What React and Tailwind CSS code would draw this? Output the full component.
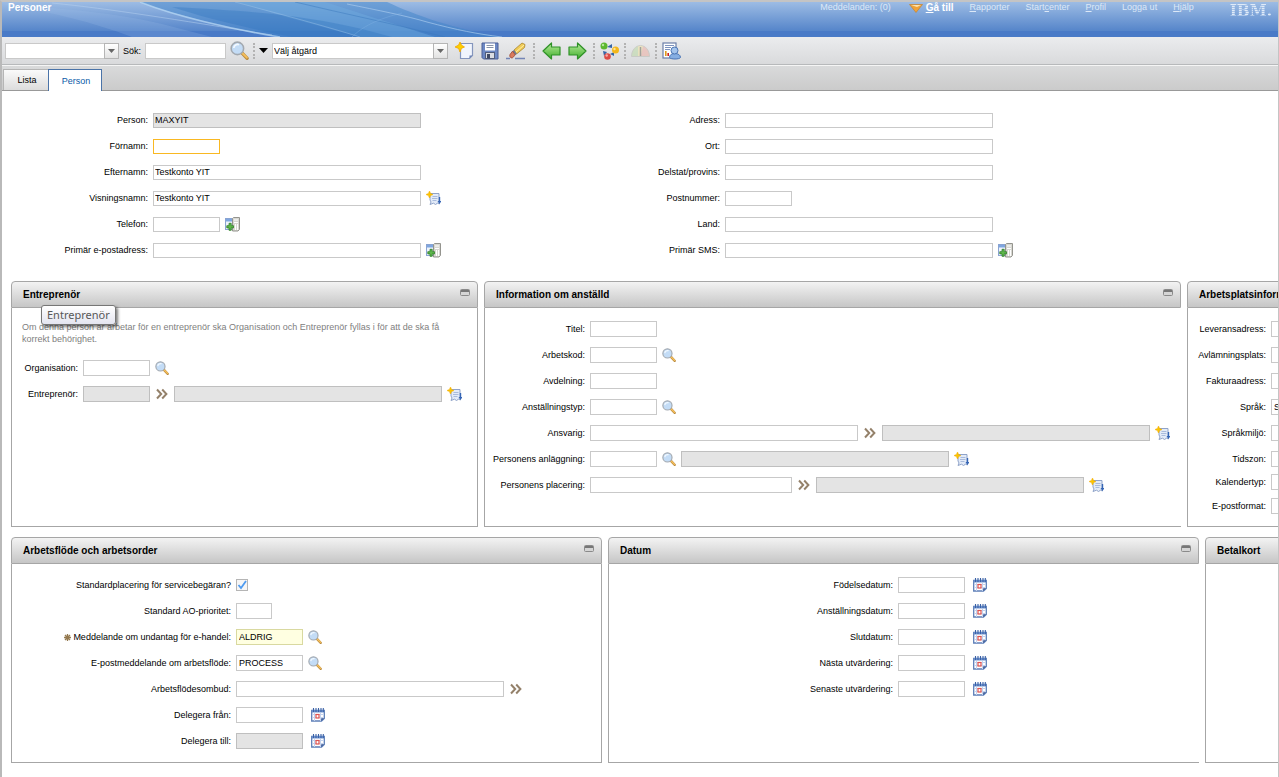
import React, { useId } from 'react';
import clsx from 'clsx';

function SearchIcon({ size = 14 }) {
  return (
    <svg width={size} height={size} viewBox="0 0 18 18">
      <path d="M11.500 11.500l4.700 4.900" stroke="#b98a3e" strokeWidth="3.200" strokeLinecap="round" />
      <path d="M11.800 11.600l4.200 4.200" stroke="#f5bf5c" strokeWidth="1.800" strokeLinecap="round" />
      <circle cx="7" cy="7" r="5.900" fill="#c3dcf6" stroke="#a3a9b0" strokeWidth="1.500" />
      <path d="M3.600 6.600a3.600 3.600 0 0 1 5-3" stroke="#f3f9ff" strokeWidth="1.600" fill="none" />
    </svg>
  );
}

function ChevronsIcon() {
  return (
    <svg width="12" height="12" viewBox="0 0 12 12" fill="none" stroke="#94816a" strokeWidth="2">
      <path d="M1 1.500L5.200 6 1 10.500M6.200 1.500L10.400 6l-4.200 4.500" />
    </svg>
  );
}

function DetailMenuIcon() {
  return (
    <svg width="15" height="15" viewBox="0 0 15 15">
      <path d="M4 2.500h9v8l.5 2.500-2-.8-2 1.300-2-1.300-3.500 1.300L5 11l-1-2z" fill="#e3ebf8" stroke="#8fa3c9" />
      <path d="M6.500 5.500h5M6 7.500h5.500M6.500 9.500h4" stroke="#a9bbdc" />
      <path d="M13.500 6v5" stroke="#3565b5" strokeWidth="1.400" />
      <path d="M11.500 10h4l-2 3z" fill="#3565b5" />
      <path d="M3.500 0l1.100 2.400L7 3.500 4.600 4.600 3.500 7 2.400 4.600 0 3.500l2.400-1.100z" fill="#fbc400" stroke="#f0a800" strokeWidth=".5" />
    </svg>
  );
}

function AddRowIcon() {
  return (
    <svg width="15" height="15" viewBox="0 0 15 15">
      <rect x=".5" y="1.500" width="8" height="11" fill="#eef3fb" stroke="#8aa4d2" />
      <path d="M1 2h7v2.500H1z" fill="#7fa6e0" />
      <path d="M7.500 1.500l1-1h6v12l-1.500 1.500H7.500z" fill="#d8d8d2" stroke="#94948e" />
      <path d="M9 3h4M9 5.500h4M10.500 7v6M12.500 7v6" stroke="#fff" />
      <path d="M4 6.300h2.200v2.400h2.300v2.200H6.200v2.400H4v-2.400H1.800V8.700H4z" fill="#5fb84b" stroke="#2f7d28" strokeWidth=".8" />
    </svg>
  );
}

function CalendarIcon() {
  return (
    <svg width="14" height="14" viewBox="0 0 14 14">
      <path d="M.7 2.500h12.600v8L10.500 13H.7z" fill="#fff" stroke="#5d7fb8" strokeWidth="1.300" />
      <path d="M1 2h12v2.500H1z" fill="#6f93cf" />
      <path d="M2.500 0v4M5 0v4M7.500 0v4M10 0v4M12.300 0v4" stroke="#3a61a6" strokeWidth="1.100" />
      <path d="M1.500 6.500h11M1.500 9.500h11M3.500 5v8M9.500 5v8" stroke="#c3d2ee" />
      <rect x="5" y="6.500" width="3" height="3.500" fill="#fff" stroke="#e0524d" strokeWidth="1.200" />
      <path d="M10.200 13v-2.700H13z" fill="#2f4f8f" />
    </svg>
  );
}

function NewIcon() {
  return (
    <svg width="19" height="18" viewBox="0 0 19 18">
      <path d="M5.500 1.500h12v12l-3 3h-9z" fill="#f1f5fd" stroke="#8596bd" strokeWidth="1.200" />
      <path d="M17.500 13.500h-3v3z" fill="#6f83b4" />
      <path d="M5 0l1.400 3.100L9.500 5 6.400 6.400 5 10 3.600 6.400 0 5l3.600-1.900z" fill="#fcd000" stroke="#f0a500" strokeWidth=".8" />
    </svg>
  );
}

function SaveIcon() {
  return (
    <svg width="18" height="18" viewBox="0 0 18 18">
      <path d="M1 1h16v16H2.500L1 15.500z" fill="#6c88c4" stroke="#4a5f96" />
      <rect x="4" y="1.500" width="10" height="7" fill="#fff" />
      <path d="M5.500 3.500h7M5.500 5.500h7" stroke="#8793a8" />
      <rect x="4.500" y="10.500" width="9" height="6" fill="#d9dce2" stroke="#515d7c" />
      <rect x="6" y="12" width="3" height="4.500" fill="#3f4964" />
    </svg>
  );
}

function EraserIcon() {
  return (
    <svg width="20" height="18" viewBox="0 0 20 18">
      <path d="M0 16.500h4M9 16.500h10" stroke="#7385b5" strokeWidth="1.400" />
      <path d="M8 8l8-7 3 1.500-.5 3-8 6.500z" fill="#f0cb57" stroke="#a88530" strokeWidth=".8" />
      <path d="M9.500 10.500L18 3" stroke="#fff0a8" />
      <path d="M6.500 9.200L8 8l2.800 3.700-1.500 1.300z" fill="#6c7891" />
      <path d="M6.500 9.200L4 12.500c-.8 1.500.3 3.800 2.200 3.500L9.300 13z" fill="#d97b5d" stroke="#9c4531" strokeWidth=".8" />
    </svg>
  );
}

function ArrowIcon({ flip }) {
  return (
    <svg width="19" height="18" viewBox="0 0 19 18" className={flip ? '-scale-x-100' : ''}>
      <defs>
        <linearGradient id="arrow-green" x1="0" y1="0" x2="0" y2="1">
          <stop offset="0" stopColor="#b7eb9a" />
          <stop offset="1" stopColor="#3fae2b" />
        </linearGradient>
      </defs>
      <path d="M1 9l8.500-8v4H18v8H9.500v4z" fill="url(#arrow-green)" stroke="#2f9128" strokeWidth="1.200" strokeLinejoin="round" />
    </svg>
  );
}

function WorkflowIcon() {
  return (
    <svg width="19" height="18" viewBox="0 0 19 18">
      <path d="M7 5l5-3v4zM3 9l4 1-3 4zM10 12l4-2v4z" fill="#3565a8" />
      <circle cx="4" cy="4" r="3.500" fill="#5cb82f" />
      <circle cx="15.500" cy="8" r="3.500" fill="#f3b71b" />
      <circle cx="7.500" cy="14.500" r="3.300" fill="#dc4a45" />
      <circle cx="3" cy="3" r="1.200" fill="#b5e59a" />
      <circle cx="14.500" cy="7" r="1.200" fill="#fde59b" />
      <circle cx="6.700" cy="13.500" r="1.200" fill="#f5aaa7" />
    </svg>
  );
}

function GaugeIcon() {
  return (
    <svg width="19" height="18" viewBox="0 0 19 18" opacity=".55">
      <path d="M.5 14.500C.5 8 4 4.500 7 4v10.500z" fill="#bcd9a6" />
      <path d="M7 4c2-.6 4-.4 5.500.5L10 14.500H7z" fill="#f1e2a2" />
      <path d="M12 4c4 1 6.500 5 6.500 10.500H9.500z" fill="#eeb0a4" />
      <path d="M.5 14.500C.5 8 5 3.500 9.500 3.500s9 4.500 9 11z" fill="none" stroke="#b9b9b0" />
      <path d="M9.500 5v9" stroke="#6d6d60" strokeWidth="1.500" />
    </svg>
  );
}

function ReportIcon() {
  return (
    <svg width="19" height="18" viewBox="0 0 19 18">
      <rect x="1" y="1" width="13" height="15" fill="#fff" stroke="#6c7fa8" strokeWidth="1.200" />
      <path d="M3 3.500h9M3 5.500h6M3 7.500h5" stroke="#7e93bd" />
      <path d="M3.800 9v5" stroke="#e09a1b" strokeWidth="1.600" />
      <path d="M6.200 11v3" stroke="#c22" strokeWidth="1.600" />
      <path d="M7.500 15.500c0-3 2.500-4 5.500-4s5.500 1.500 5.500 4c-1 2-10 2-11 0z" fill="#86aee2" stroke="#4c75b5" />
      <circle cx="12.500" cy="8.500" r="3.500" fill="#a4c4ec" stroke="#4c75b5" />
    </svg>
  );
}

const ICONS = {
  search: { Icon: SearchIcon, title: 'Välj värde' },
  goto: { Icon: ChevronsIcon, title: 'Detaljmeny' },
  menu: { Icon: DetailMenuIcon, title: 'Lång beskrivning' },
  add: { Icon: AddRowIcon, title: 'Detaljer' },
  date: { Icon: CalendarIcon, title: 'Välj datum' },
};

const WIDTHS = {
  xs: 'w-9',
  sm: 'w-[67px]',
  md: 'w-[202px]',
  lg: 'w-[268px]',
};

function IconButton({ kind }) {
  const { Icon, title } = ICONS[kind];
  return (
    <button
      type="button"
      aria-label={title}
      className={clsx('flex shrink-0 items-center justify-center', kind === 'date' ? 'w-[29px]' : 'w-6')}
    >
      <Icon />
    </button>
  );
}

function TextBox({ id, size = 'sm', value = '', readOnly, required, focused, compact, label }) {
  return (
    <input
      id={id}
      type="text"
      aria-label={label}
      defaultValue={value}
      readOnly={readOnly}
      className={clsx(
        'shrink-0 border text-[9px] leading-3 text-black outline-none',
        WIDTHS[size],
        compact ? 'h-[15px] px-px' : 'h-4 px-0.5',
        readOnly ? 'border-[#bfbfbf] bg-[#e4e4e4]' : required ? 'border-[#d9d9a0] bg-[#ffffe1]' : 'bg-white',
        !readOnly && !required && (focused ? 'border-[#f9b822]' : 'border-[#c9c9c9]')
      )}
    />
  );
}

function Field({ label, labelWidth, rowHeight = 'h-[26px]', icon, extra, extraIcon, checkbox, ...box }) {
  const id = useId();
  return (
    <div className={clsx('flex items-center', rowHeight)}>
      <label
        htmlFor={id}
        className={clsx('flex shrink-0 items-center justify-end gap-0.5 pr-[5px] leading-3 whitespace-nowrap', labelWidth)}
      >
        {box.required && (
          <svg width="7" height="7" viewBox="0 0 7 7" stroke="#94794f" strokeWidth="1.300">
            <path d="M3.500 0v7M0 3.500h7M1 1l5 5M6 1L1 6" />
          </svg>
        )}
        {label}
      </label>
      {checkbox ? (
        <span className="relative size-3">
          <input
            id={id}
            type="checkbox"
            defaultChecked
            className="peer block size-3 appearance-none border border-[#b5b5b5] bg-[#f6f6f6]"
          />
          <svg className="pointer-events-none absolute inset-0 hidden peer-checked:block" width="12" height="12" viewBox="0 0 12 12">
            <path d="M2.500 6l2.500 3L10 2" fill="none" stroke="#4f9bf0" strokeWidth="1.800" />
          </svg>
        </span>
      ) : (
        <TextBox id={id} {...box} />
      )}
      {icon && <IconButton kind={icon} />}
      {extra && <TextBox size="lg" readOnly label={`${label} beskrivning`} />}
      {extraIcon && <IconButton kind={extraIcon} />}
    </div>
  );
}

function Panel({ title, width, openRight, bodyClass, tooltip, children }) {
  return (
    <section className={clsx('relative flex shrink-0 flex-col rounded-t', width)}>
      <header className="flex h-[27px] items-center justify-between rounded-t border border-[#a6a6a6] bg-linear-to-b from-[#f3f3f3] to-[#c6c6c6] pr-[7px] pl-[11px]">
        <h2 className="text-[10px] leading-3 font-bold whitespace-nowrap">{title}</h2>
        <button type="button" aria-label="Minimera" className="mb-1">
          <svg width="10" height="7" viewBox="0 0 10 7">
            <rect x=".5" y=".5" width="9" height="6" rx="1" fill="#d5d5d5" stroke="#8a8a8a" />
            <path d="M1 2h8" stroke="#777" strokeWidth="2" />
          </svg>
        </button>
      </header>
      <div className={clsx('grow border-b border-l border-[#a6a6a6]', !openRight && 'border-r', bodyClass)}>
        {children}
      </div>
      {tooltip && (
        <div
          role="tooltip"
          className="absolute top-6 left-[30px] rounded-[3px] border border-[#767676] bg-linear-to-b from-white to-[#e4e5f0] px-[5px] font-['Noto_Sans',sans-serif] text-[11px] leading-[18px] text-[#575757] shadow-[2px_2px_3px_rgba(0,0,0,0.5)]"
        >
          {tooltip}
        </div>
      )}
    </section>
  );
}

function ComboBox({ id, label, width, options }) {
  return (
    <span className={clsx('relative', width)}>
      <select
        id={id}
        aria-label={label}
        className="block h-4 w-full appearance-none border border-[#c9c9c9] bg-white pl-px text-[9px] leading-3 text-black"
      >
        {options.map((option) => (
          <option key={option}>{option}</option>
        ))}
      </select>
      <span className="pointer-events-none absolute top-0 right-0 flex h-4 w-[15px] items-center justify-center border border-[#b5b5b5] bg-linear-to-b from-white to-[#e2e2e2]">
        <svg width="7" height="4" viewBox="0 0 7 4">
          <path d="M0 0h7L3.500 4z" fill="#666" />
        </svg>
      </span>
    </span>
  );
}

function Separator() {
  return <span className="h-4 border-l-2 border-dotted border-[#b3b3b3]" />;
}

function Waves() {
  return (
    <svg className="pointer-events-none absolute top-0 left-0" width="500" height="35" viewBox="0 0 500 35">
      <path d="M138 0H385C415 14 450 26 500 35H278C225 25 170 12 138 0z" fill="#4286c9" opacity=".5" />
      <path d="M235 0h88c30 10 70 22 110 35h-75C310 22 265 10 235 0z" fill="#73aee0" opacity=".4" />
      <path d="M170 5c80 4 130 8 190 22l30 8H290C240 25 200 15 170 5z" fill="#2f74bd" opacity=".35" />
      <path d="M0 2c60 4 120 10 160 20l50 13H130C90 20 50 10 0 2z" fill="#a5c4ea" opacity=".2" />
      <path d="M50 1c60 6 120 16 220 32" stroke="#b8d2ef" strokeWidth="1" fill="none" opacity=".5" />
      <path d="M138 0c35 14 90 27 140 35" stroke="#b9dcf6" strokeWidth="1.600" fill="none" opacity=".7" />
      <path d="M233 0c45 12 90 24 125 35" stroke="#a6c9ec" strokeWidth="1" fill="none" opacity=".4" />
      <path d="M293 0c50 12 100 22 150 35" stroke="#3b79be" strokeWidth="1" fill="none" opacity=".5" />
      <path d="M345 2c30 6 60 12 80 18 30 8 50 12 75 15" stroke="#a6c9ec" strokeWidth="1" fill="none" opacity=".7" />
      <path d="M350 35c10-10 25-18 50-24" stroke="#7fb2e3" strokeWidth="1" fill="none" opacity=".4" />
    </svg>
  );
}

function TopBar() {
  return (
    <header className="relative flex h-[35px] items-start justify-between bg-[linear-gradient(#9dbce4,#5585ca_29px,#497ac7_29px)] text-[#dce8f7]">
      <Waves />
      <h1 className="relative pl-1.5 text-[10px] leading-3 font-bold text-white">Personer</h1>
      <nav className="relative flex items-start gap-4 pr-[6px] leading-[11px] whitespace-nowrap">
        <a href="#meddelanden" className="mr-0.5">Meddelanden: (0)</a>
        <a href="#ga-till" className="flex items-start gap-[3px] font-bold text-white">
          <svg width="14" height="9" viewBox="0 0 14 9" className="mt-0.5">
            <path d="M.5.500h13L7 8.500z" fill="#efa23a" stroke="#c57d23" strokeWidth=".6" />
            <path d="M2 1h10L8 3z" fill="#fde3ae" />
          </svg>
          <span className="text-[10px]"><u>G</u>å till</span>
        </a>
        <a href="#rapporter"><u>R</u>apporter</a>
        <a href="#startcenter">Start<u>c</u>enter</a>
        <a href="#profil"><u>P</u>rofil</a>
        <a href="#logga-ut">Logga ut</a>
        <a href="#hjalp"><u>H</u>jälp</a>
        <span className="ml-5 bg-[repeating-linear-gradient(#e0ebf8_0_1px,#a9c4e8_1px_2px)] bg-clip-text font-['DejaVu_Serif_Condensed','DejaVu_Serif',serif] text-[17px] leading-[17px] font-bold text-transparent">
          IBM.
        </span>
      </nav>
    </header>
  );
}

const MAIN_TOOLS = [
  { label: 'Ny', Icon: NewIcon },
  { label: 'Spara', Icon: SaveIcon },
  { label: 'Rensa', Icon: EraserIcon },
  null,
  { label: 'Föregående', Icon: ArrowIcon },
  { label: 'Nästa', Icon: () => <ArrowIcon flip /> },
];

const EXTRA_TOOLS = [
  null,
  { label: 'Arbetsflöde', Icon: WorkflowIcon },
  null,
  { label: 'Nyckeltal', Icon: GaugeIcon },
  null,
  { label: 'Rapporter', Icon: ReportIcon },
];

function ToolGroup({ tools, className }) {
  return (
    <div className={clsx('flex items-center', className)}>
      {tools.map((tool, i) =>
        tool ? (
          <button key={i} type="button" aria-label={tool.label}>
            <tool.Icon />
          </button>
        ) : (
          <Separator key={i} />
        )
      )}
    </div>
  );
}

function Toolbar() {
  return (
    <div className="flex h-7 items-center border-b border-[#b7b9bb] bg-linear-to-b from-[#ebecee] to-[#d9dadc] pl-[3px]">
      <ComboBox label="Fråga" width="w-[114px]" options={['']} />
      <label htmlFor="quick-search" className="w-[26px] text-center">Sök:</label>
      <input id="quick-search" type="text" className="h-4 w-[81px] border border-[#c9c9c9] bg-white px-px text-[9px] outline-none" />
      <button type="button" aria-label="Sök" className="mx-1">
        <SearchIcon size={19} />
      </button>
      <Separator />
      <svg width="9" height="5" viewBox="0 0 9 5" className="mx-1">
        <path d="M0 0h9L4.500 5z" />
      </svg>
      <ComboBox label="Åtgärd" width="w-[176px]" options={['Välj åtgärd']} />
      <ToolGroup tools={MAIN_TOOLS} className="ml-[7px] gap-[7px]" />
      <ToolGroup tools={EXTRA_TOOLS} className="ml-1.5 gap-[5px]" />
    </div>
  );
}

function Tabs() {
  return (
    <div
      role="tablist"
      className="flex h-[26px] items-end border-t border-b border-t-[#f5f5f5] border-b-[#999] bg-linear-to-b from-[#d9dadb] to-[#cbcbcb] pl-px"
    >
      <button
        type="button"
        role="tab"
        aria-selected="false"
        className="h-[21px] w-[45px] border-t border-l border-[#b5b5b5] bg-linear-to-b from-[#fafafa] to-[#dcdcdc] pl-0.5 text-center"
      >
        Lista
      </button>
      <button
        type="button"
        role="tab"
        aria-selected="true"
        className="-mb-px h-[22px] w-[54px] border-x border-t border-[#4a73a8] bg-white pl-0.5 text-center text-[#0a5aa8]"
      >
        Person
      </button>
    </div>
  );
}

function Fields({ labelWidth, fields, compact }) {
  return fields.map((field) => (
    <Field key={field.label} labelWidth={labelWidth} compact={compact} {...field} />
  ));
}

const PERSON = [
  { label: 'Person:', size: 'lg', value: 'MAXYIT', readOnly: true },
  { label: 'Förnamn:', focused: true },
  { label: 'Efternamn:', size: 'lg', value: 'Testkonto YIT' },
  { label: 'Visningsnamn:', size: 'lg', value: 'Testkonto YIT', icon: 'menu' },
  { label: 'Telefon:', icon: 'add' },
  { label: 'Primär e-postadress:', size: 'lg', icon: 'add' },
];

const ADDRESS = [
  { label: 'Adress:', size: 'lg' },
  { label: 'Ort:', size: 'lg' },
  { label: 'Delstat/provins:', size: 'lg' },
  { label: 'Postnummer:' },
  { label: 'Land:', size: 'lg' },
  { label: 'Primär SMS:', size: 'lg', icon: 'add' },
];

const CONTRACTOR = [
  { label: 'Organisation:', icon: 'search' },
  { label: 'Entreprenör:', readOnly: true, icon: 'goto', extra: true, extraIcon: 'menu' },
];

const EMPLOYEE = [
  { label: 'Titel:' },
  { label: 'Arbetskod:', icon: 'search' },
  { label: 'Avdelning:' },
  { label: 'Anställningstyp:', icon: 'search' },
  { label: 'Ansvarig:', size: 'lg', icon: 'goto', extra: true, extraIcon: 'menu' },
  { label: 'Personens anläggning:', icon: 'search', extra: true, extraIcon: 'menu' },
  { label: 'Personens placering:', size: 'md', icon: 'goto', extra: true, extraIcon: 'menu' },
];

const WORKPLACE = [
  { label: 'Leveransadress:' },
  { label: 'Avlämningsplats:' },
  { label: 'Fakturaadress:' },
  { label: 'Språk:', value: 'SV' },
  { label: 'Språkmiljö:' },
  { label: 'Tidszon:' },
  { label: 'Kalendertyp:', rowHeight: 'h-5' },
  { label: 'E-postformat:', rowHeight: 'h-7' },
];

const WORKFLOW = [
  { label: 'Standardplacering för servicebegäran?', checkbox: true },
  { label: 'Standard AO-prioritet:', size: 'xs' },
  { label: 'Meddelande om undantag för e-handel:', value: 'ALDRIG', required: true, icon: 'search' },
  { label: 'E-postmeddelande om arbetsflöde:', value: 'PROCESS', icon: 'search' },
  { label: 'Arbetsflödesombud:', size: 'lg', icon: 'goto' },
  { label: 'Delegera från:', icon: 'date' },
  { label: 'Delegera till:', readOnly: true, icon: 'date' },
];

const DATES = [
  { label: 'Födelsedatum:', icon: 'date' },
  { label: 'Anställningsdatum:', icon: 'date' },
  { label: 'Slutdatum:', icon: 'date' },
  { label: 'Nästa utvärdering:', icon: 'date' },
  { label: 'Senaste utvärdering:', icon: 'date' },
];

export default function App() {
  return (
    <div className="min-h-screen overflow-hidden border-t-2 border-r border-l-2 border-[#c4c4c4] border-l-[#b9b9b9] bg-white font-['Liberation_Sans',Arial,sans-serif] text-[9px] leading-3 text-black">
      <TopBar />
      <Toolbar />
      <Tabs />
      <main>
        <div className="flex pt-4 pb-[18px]">
          <div className="w-[572px] shrink-0">
            <Fields labelWidth="w-[151px]" fields={PERSON} compact />
          </div>
          <div>
            <Fields labelWidth="w-[151px]" fields={ADDRESS} compact />
          </div>
        </div>

        <div className="flex flex-col gap-2.5 pl-[9px]">
          <div className="flex gap-1.5">
            <Panel title="Entreprenör" width="w-[467px]" bodyClass="pt-[13px]" tooltip="Entreprenör">
              <p className="mb-2.5 px-2.5 text-[#808080]">
                Om denna person är arbetar för en entreprenör ska Organisation och Entreprenör fyllas i för att de ska få
                korrekt behörighet.
              </p>
              <Fields labelWidth="w-[71px]" fields={CONTRACTOR} />
            </Panel>
            <Panel title="Information om anställd" width="w-[697px]" openRight bodyClass="pt-2 pb-7">
              <Fields labelWidth="w-[105px]" fields={EMPLOYEE} />
            </Panel>
            <Panel title="Arbetsplatsinformation" width="w-[467px]" bodyClass="pt-2 pb-1.5">
              <Fields labelWidth="w-[83px]" fields={WORKPLACE} />
            </Panel>
          </div>

          <div className="flex gap-1.5">
            <Panel title="Arbetsflöde och arbetsorder" width="w-[591px]" bodyClass="py-2">
              <Fields labelWidth="w-[224px]" fields={WORKFLOW} />
            </Panel>
            <Panel title="Datum" width="w-[591px]" openRight bodyClass="py-2">
              <Fields labelWidth="w-[289px]" fields={DATES} />
            </Panel>
            <Panel title="Betalkort" width="w-[467px]" bodyClass="py-2" />
          </div>
        </div>
      </main>
    </div>
  );
}
